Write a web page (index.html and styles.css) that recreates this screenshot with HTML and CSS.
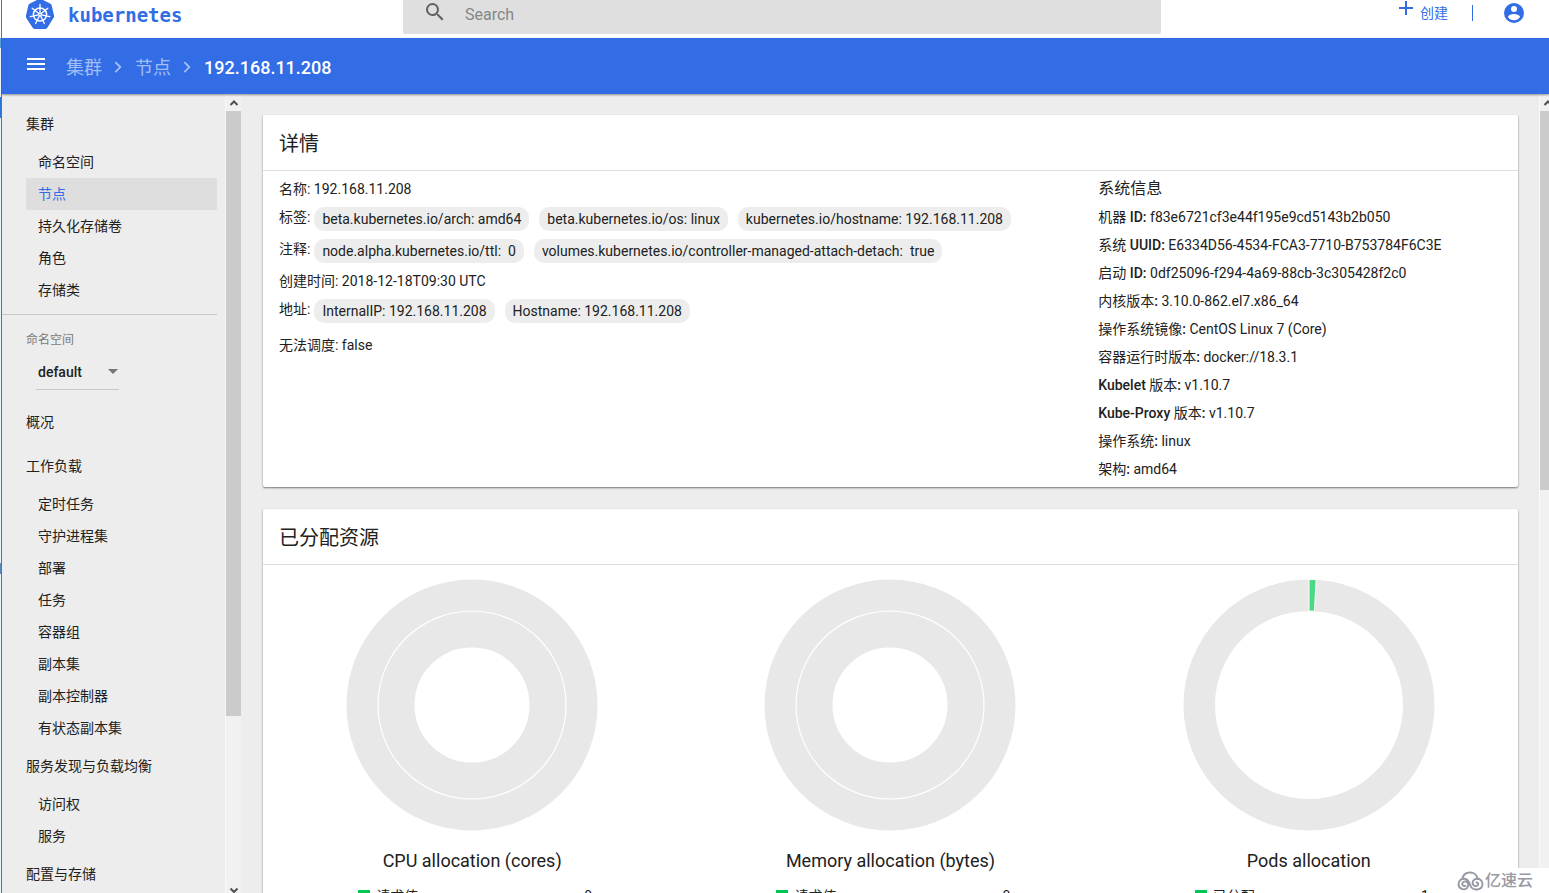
FILE: index.html
```html
<!DOCTYPE html>
<html lang="zh-CN">
<head>
<meta charset="utf-8">
<title>192.168.11.208 - Kubernetes Dashboard</title>
<link rel="stylesheet" href="styles.css">
</head>
<body>
<div class="app">
  <header class="top">
    <a class="brand" href="#">
      <svg class="brand-logo" viewBox="0 0 30 30" aria-hidden="true">
        <path fill="#326de6" d="M15-1 Q16-1 17-.5L25 3.400Q26.300 4 26.700 5.500L29 15.500Q29.300 17 28.400 18L22.500 27.500Q21.500 29 20 29H10Q8.500 29 7.500 27.500L1.600 18.500Q.7 17 1 15.500L3.300 5.500Q3.700 4 5 3.400L13-.5Q14-1 15-1Z"/>
        <g fill="none" stroke="#fff" stroke-linecap="round">
          <circle cx="15" cy="14.500" r="6.600" stroke-width="1.500"/>
          <g stroke-width="1.300">
            <path d="M15 13V4.500"/>
            <path d="M15 13V4.500" transform="rotate(51.430 15 14.500)"/>
            <path d="M15 13V4.500" transform="rotate(102.860 15 14.500)"/>
            <path d="M15 13V4.500" transform="rotate(154.290 15 14.500)"/>
            <path d="M15 13V4.500" transform="rotate(205.710 15 14.500)"/>
            <path d="M15 13V4.500" transform="rotate(257.140 15 14.500)"/>
            <path d="M15 13V4.500" transform="rotate(308.570 15 14.500)"/>
          </g>
        </g>
        <circle cx="15" cy="14.500" r="1.800" fill="#fff"/>
        <circle cx="15" cy="14.500" r=".7" fill="#326de6"/>
      </svg>
      <span class="brand-name">kubernetes</span>
    </a>
    <label class="search">
      <svg class="icon" viewBox="0 0 24 24" aria-hidden="true"><path fill="#616161" d="M15.500 14h-.79l-.28-.27A6.470 6.470 0 0 0 16 9.500 6.500 6.500 0 1 0 9.500 16c1.610 0 3.090-.59 4.230-1.570l.27.28v.79l5 4.990L20.490 19l-4.990-5zm-6 0C7.010 14 5 11.990 5 9.500S7.010 5 9.500 5 14 7.010 14 9.500 11.990 14 9.500 14z"/></svg>
      <input type="text" placeholder="Search" aria-label="Search">
    </label>
    <div class="actions">
      <button class="create" type="button">
        <svg viewBox="0 0 16 16" aria-hidden="true"><path d="M8 1v14M1 8h14" stroke="#326de6" stroke-width="2"/></svg>
        <span>创建</span>
      </button>
      <span class="separator"></span>
      <button class="user" type="button" aria-label="用户">
        <svg class="icon" viewBox="0 0 24 24" aria-hidden="true"><path fill="#326de6" d="M12 2a10 10 0 1 0 0 20 10 10 0 0 0 0-20zm0 3a3 3 0 1 1 0 6 3 3 0 0 1 0-6zm0 14.200a7.200 7.200 0 0 1-6-3.220c.03-1.990 4-3.080 6-3.080 1.990 0 5.970 1.090 6 3.080a7.200 7.200 0 0 1-6 3.220z"/></svg>
      </button>
    </div>
  </header>

  <div class="toolbar">
    <button class="menu" type="button" aria-label="菜单">
      <svg class="icon" viewBox="0 0 24 24" aria-hidden="true"><path fill="#fff" d="M3 18h18v-2H3v2zm0-5h18v-2H3v2zm0-7v2h18V6H3z"/></svg>
    </button>
    <nav class="crumbs">
      <a href="#">集群</a>
      <svg class="chevron" viewBox="0 0 10 18" aria-hidden="true"><path d="M1.500 2.500l5.500 5.500-5.500 5.500"/></svg>
      <a href="#">节点</a>
      <svg class="chevron" viewBox="0 0 10 18" aria-hidden="true"><path d="M1.500 2.500l5.500 5.500-5.500 5.500"/></svg>
      <span class="current">192.168.11.208</span>
    </nav>
  </div>

  <div class="content">
    <nav class="sidebar">
      <a class="group" href="#">集群</a>
      <a class="item" href="#">命名空间</a>
      <a class="item active" href="#">节点</a>
      <a class="item" href="#">持久化存储卷</a>
      <a class="item" href="#">角色</a>
      <a class="item" href="#">存储类</a>
      <hr>
      <label class="ns-label" for="ns">命名空间</label>
      <div class="ns">
        <select id="ns"><option>default</option></select>
        <svg viewBox="0 0 10 5" aria-hidden="true"><path fill="#757575" d="M0 0h10L5 5z"/></svg>
      </div>
      <a class="group" href="#">概况</a>
      <a class="group" href="#">工作负载</a>
      <a class="item" href="#">定时任务</a>
      <a class="item" href="#">守护进程集</a>
      <a class="item" href="#">部署</a>
      <a class="item" href="#">任务</a>
      <a class="item" href="#">容器组</a>
      <a class="item" href="#">副本集</a>
      <a class="item" href="#">副本控制器</a>
      <a class="item" href="#">有状态副本集</a>
      <a class="group" href="#">服务发现与负载均衡</a>
      <a class="item" href="#">访问权</a>
      <a class="item" href="#">服务</a>
      <a class="group" href="#">配置与存储</a>
    </nav>
    <div class="scrollbar side-scroll">
      <svg viewBox="0 0 16 16" aria-hidden="true"><path d="M4.500 10l3.500-3.500 3.500 3.500"/></svg>
      <div class="track"><div class="thumb"></div></div>
      <svg viewBox="0 0 16 16" aria-hidden="true"><path d="M4.500 11.500l3.500 3.500 3.500-3.500"/></svg>
    </div>

    <main class="main">
      <section class="card">
        <h2>详情</h2>
        <div class="details">
          <div class="facts">
            <div class="row"><span>名称:</span> 192.168.11.208</div>
            <div class="row chips"><span class="name">标签:</span><span class="chip">beta.kubernetes.io/arch: amd64</span><span class="chip">beta.kubernetes.io/os: linux</span><span class="chip">kubernetes.io/hostname: 192.168.11.208</span></div>
            <div class="row chips"><span class="name">注释:</span><span class="chip">node.alpha.kubernetes.io/ttl:&nbsp; 0</span><span class="chip">volumes.kubernetes.io/controller-managed-attach-detach:&nbsp; true</span></div>
            <div class="row"><span>创建时间:</span> 2018-12-18T09:30 UTC</div>
            <div class="row chips"><span class="name">地址:</span><span class="chip">InternalIP: 192.168.11.208</span><span class="chip">Hostname: 192.168.11.208</span></div>
            <div class="row spaced"><span>无法调度:</span> false</div>
          </div>
          <div class="system">
            <h3>系统信息</h3>
            <div class="row">机器 <b>ID:</b> f83e6721cf3e44f195e9cd5143b2b050</div>
            <div class="row">系统 <b>UUID:</b> E6334D56-4534-FCA3-7710-B753784F6C3E</div>
            <div class="row">启动 <b>ID:</b> 0df25096-f294-4a69-88cb-3c305428f2c0</div>
            <div class="row">内核版本<b>:</b> 3.10.0-862.el7.x86_64</div>
            <div class="row">操作系统镜像<b>:</b> CentOS Linux 7 (Core)</div>
            <div class="row">容器运行时版本<b>:</b> docker://18.3.1</div>
            <div class="row"><b>Kubelet</b> 版本<b>:</b> v1.10.7</div>
            <div class="row"><b>Kube-Proxy</b> 版本<b>:</b> v1.10.7</div>
            <div class="row">操作系统<b>:</b> linux</div>
            <div class="row">架构<b>:</b> amd64</div>
          </div>
        </div>
      </section>

      <section class="card">
        <h2>已分配资源</h2>
        <div class="charts">
          <figure>
            <svg class="donut" viewBox="0 0 252 252" aria-hidden="true">
              <circle cx="126" cy="126" r="91.500" fill="none" stroke="#e8e8e8" stroke-width="68"/>
              <circle cx="126" cy="126" r="94" fill="none" stroke="#fff" stroke-width="1.200"/>
            </svg>
            <figcaption>CPU allocation (cores)</figcaption>
            <div class="legend"><i></i><span>请求值</span><span class="value">0</span></div>
          </figure>
          <figure>
            <svg class="donut" viewBox="0 0 252 252" aria-hidden="true">
              <circle cx="126" cy="126" r="91.500" fill="none" stroke="#e8e8e8" stroke-width="68"/>
              <circle cx="126" cy="126" r="94" fill="none" stroke="#fff" stroke-width="1.200"/>
            </svg>
            <figcaption>Memory allocation (bytes)</figcaption>
            <div class="legend"><i></i><span>请求值</span><span class="value">0</span></div>
          </figure>
          <figure>
            <svg class="donut" viewBox="0 0 252 252" aria-hidden="true">
              <circle cx="126" cy="126" r="109.750" fill="none" stroke="#e8e8e8" stroke-width="31.500"/>
              <path d="M126 .5A125.500 125.500 0 0 1 133.200.7L131.400 32.200A94 94 0 0 0 126 32Z" fill="#4bd886" stroke="#fff"/>
            </svg>
            <figcaption>Pods allocation</figcaption>
            <div class="legend"><i></i><span>已分配</span><span class="value">1</span></div>
          </figure>
        </div>
      </section>
    </main>
    <div class="scrollbar main-scroll">
      <svg viewBox="0 0 16 16" aria-hidden="true"><path d="M4.500 10l3.500-3.500 3.500 3.500"/></svg>
      <div class="track"><div class="thumb"></div></div>
    </div>
  </div>
</div>
<div class="watermark">
  <svg viewBox="0 0 27 20" aria-hidden="true"><g fill="none" stroke="#9698a3" stroke-width="1.900" stroke-linecap="round"><path d="M5.500 8C6 4 9 1.500 13 1.500C17 1.500 20 4 20.500 7.500"/><path d="M8.500 14.800C6.500 15.500 5 14 5.300 12.400C5.700 10.500 8 9.800 9.800 11C12 12.500 11.500 16 9.500 17.500C6.500 19.500 1.500 17.500 1.500 13.200C1.500 9.500 4.500 7.500 7.500 7.800C12.500 8.300 12 13 14.500 16.500C17 19.500 25.500 19.500 25.500 13C25.500 9.500 22.500 7.500 19.800 7.800C16.500 8 14.800 11 16 13.500C17 15.500 20.500 15.800 21.200 13.500C21.500 12 20.500 11.300 19.500 11.500"/></g></svg>
  <span>亿速云</span>
</div>
</body>
</html>
```
FILE: styles.css
```css
* { box-sizing: border-box; }

body {
  margin: 0;
  height: 100vh;
  overflow: hidden;
  background: linear-gradient(#fff 0 38px, #5aa5dd 38px 48px, #f4fafd 48px 97px, #2a74d8 97px 118px, #e9f3fa 118px 563px, #5a86c0 563px 574px, #e9f3fa 574px);
  color: #212121;
  font: 14px/20px Roboto, "Noto Sans CJK SC", sans-serif;
}

a { color: inherit; text-decoration: none; }
button { margin: 0; padding: 0; border: 0; background: none; font: inherit; color: inherit; }
svg { display: block; flex: none; }
.icon { width: 24px; height: 24px; }

.app {
  display: flex;
  flex-direction: column;
  height: 100%;
  margin-left: 1px;
  border-left: 1px solid #3480bd;
}

.top {
  display: grid;
  grid-template-columns: 401fr 758fr 388fr;
  align-items: start;
  height: 38px;
  flex: none;
  background: #fff;
}
.brand { display: flex; align-items: center; gap: 13px; height: 30px; padding-left: 23px; }
.brand-logo { width: 30px; height: 30px; }
.brand-name { color: #326de6; font: bold 19px/30px "DejaVu Sans Mono", monospace; }
.search {
  display: flex;
  gap: 18px;
  height: 34px;
  padding-left: 20px;
  background: #dfdfdf;
  border-radius: 0 0 2px 2px;
}
.search input {
  flex: 1;
  height: 28px;
  padding: 0;
  border: 0;
  outline: 0;
  background: none;
  font: 16px Roboto, sans-serif;
}
.search input::placeholder { color: #868686; }
.actions {
  display: flex;
  align-items: center;
  justify-content: flex-end;
  height: 26px;
  padding-right: 23px;
  color: #326de6;
}
.create { display: flex; align-items: flex-start; gap: 6px; height: 26px; }
.create svg { width: 16px; height: 16px; }
.create span { line-height: 26px; }
.separator { width: 1px; height: 16px; margin: 0 29px 0 24px; background: #326de6; }

.toolbar {
  display: flex;
  align-items: center;
  flex: none;
  height: 56px;
  padding-left: 22px;
  background: #326de6;
  box-shadow: 0 1px 2px rgba(0, 0, 0, .4);
  z-index: 1;
}
.menu { padding-bottom: 4px; }
.crumbs { display: flex; align-items: center; gap: 12px; margin-left: 18px; padding-top: 3px; font-size: 18px; line-height: 24px; color: #a3bff5; }
.chevron { width: 9px; height: 18px; fill: none; stroke: #a3bff5; stroke-width: 2; }
.current { color: #fff; font-weight: 500; }

.content { display: flex; flex: 1; min-height: 0; background: #ededed; }

.sidebar { flex: none; width: 223px; padding: 8px 8px 0 0; overflow: hidden; }
.group, .item { display: block; margin-left: 24px; }
.group { line-height: 44px; }
.item { padding-left: 12px; line-height: 32px; }
.item.active { background: #dedede; color: #326de6; }
.sidebar hr { margin: 8px 0 0; border: 0; border-top: 1px solid #c8c8c8; }
.ns-label { display: block; margin: 15px 0 0 24px; font-size: 12px; color: #7a7a7a; }
.ns {
  display: flex;
  align-items: center;
  width: 83px;
  height: 34px;
  margin: 6px 0 10px 34px;
  padding-bottom: 2px;
  border-bottom: 1px solid #c8c8c8;
}
.ns select {
  flex: 1;
  min-width: 0;
  appearance: none;
  border: 0;
  padding: 0 0 0 2px;
  background: none;
  color: inherit;
  font: 500 14px Roboto, sans-serif;
}
.ns svg { width: 10px; height: 5px; margin-right: 1px; }

.scrollbar { display: flex; flex-direction: column; flex: none; background: #f1f1f1; overflow: hidden; }
.scrollbar svg { width: 16px; height: 16px; fill: none; stroke: #505050; stroke-width: 2; }
.track { flex: 1; }
.thumb { background: #cbcbcb; }
.side-scroll { width: 16px; border-left: 1px solid #f8f8f8; }
.side-scroll .thumb { height: 79%; }
.main-scroll { width: 10px; border-left: 1px solid #fafafa; }
.main-scroll .thumb { height: 48.5%; }
.scrollbar svg:first-child { margin-top: 1px; }

.main { flex: 1; min-width: 0; padding: 21px 21px 0 22px; overflow: hidden; }
.card { margin-bottom: 22px; background: #fff; border-radius: 2px; box-shadow: 0 1px 2px rgba(0, 0, 0, .5); }
h2 { margin: 0; padding: 3px 16px 0; border-bottom: 1px solid #dedede; font-size: 20px; font-weight: 400; line-height: 52px; }
h3 { margin: 0; font-size: 16px; font-weight: 400; line-height: 28px; }
.details { display: grid; grid-template-columns: 199fr 100fr; padding: 4px 0; }
.facts { padding-left: 16px; }
.row { line-height: 28px; }
.row b { font-weight: 500; }
.chips { display: flex; align-items: center; gap: 10px; height: 32px; }
.chips .name { margin-right: -6px; padding-bottom: 4px; }
.chip { padding: 0 8px; border-radius: 10px; background: #ededed; line-height: 24px; }
.spaced { margin-top: 4px; }

.charts { display: grid; grid-template-columns: repeat(3, 1fr); padding-top: 14px; }
figure { display: flex; flex-direction: column; align-items: center; margin: 0; }
.donut { width: 252px; height: 252px; }
figcaption { margin-top: 18px; font-size: 18px; line-height: 24px; }
.legend { display: flex; align-items: center; gap: 6px; width: 234px; margin: 13px 0 40px 6px; }
.legend i { width: 12px; height: 12px; background: #00c752; }
.value { margin-left: auto; }

/* Site mark laid over the bottom right corner */
.watermark {
  position: fixed;
  right: 0;
  bottom: 0;
  z-index: 2;
  display: flex;
  align-items: center;
  gap: 1px;
  height: 25px;
  padding: 0 16px 0 8px;
  background: #fff;
  color: #9698a3;
  font-size: 16px;
  font-weight: 500;
}
.watermark svg { width: 27px; height: 20px; }
```
